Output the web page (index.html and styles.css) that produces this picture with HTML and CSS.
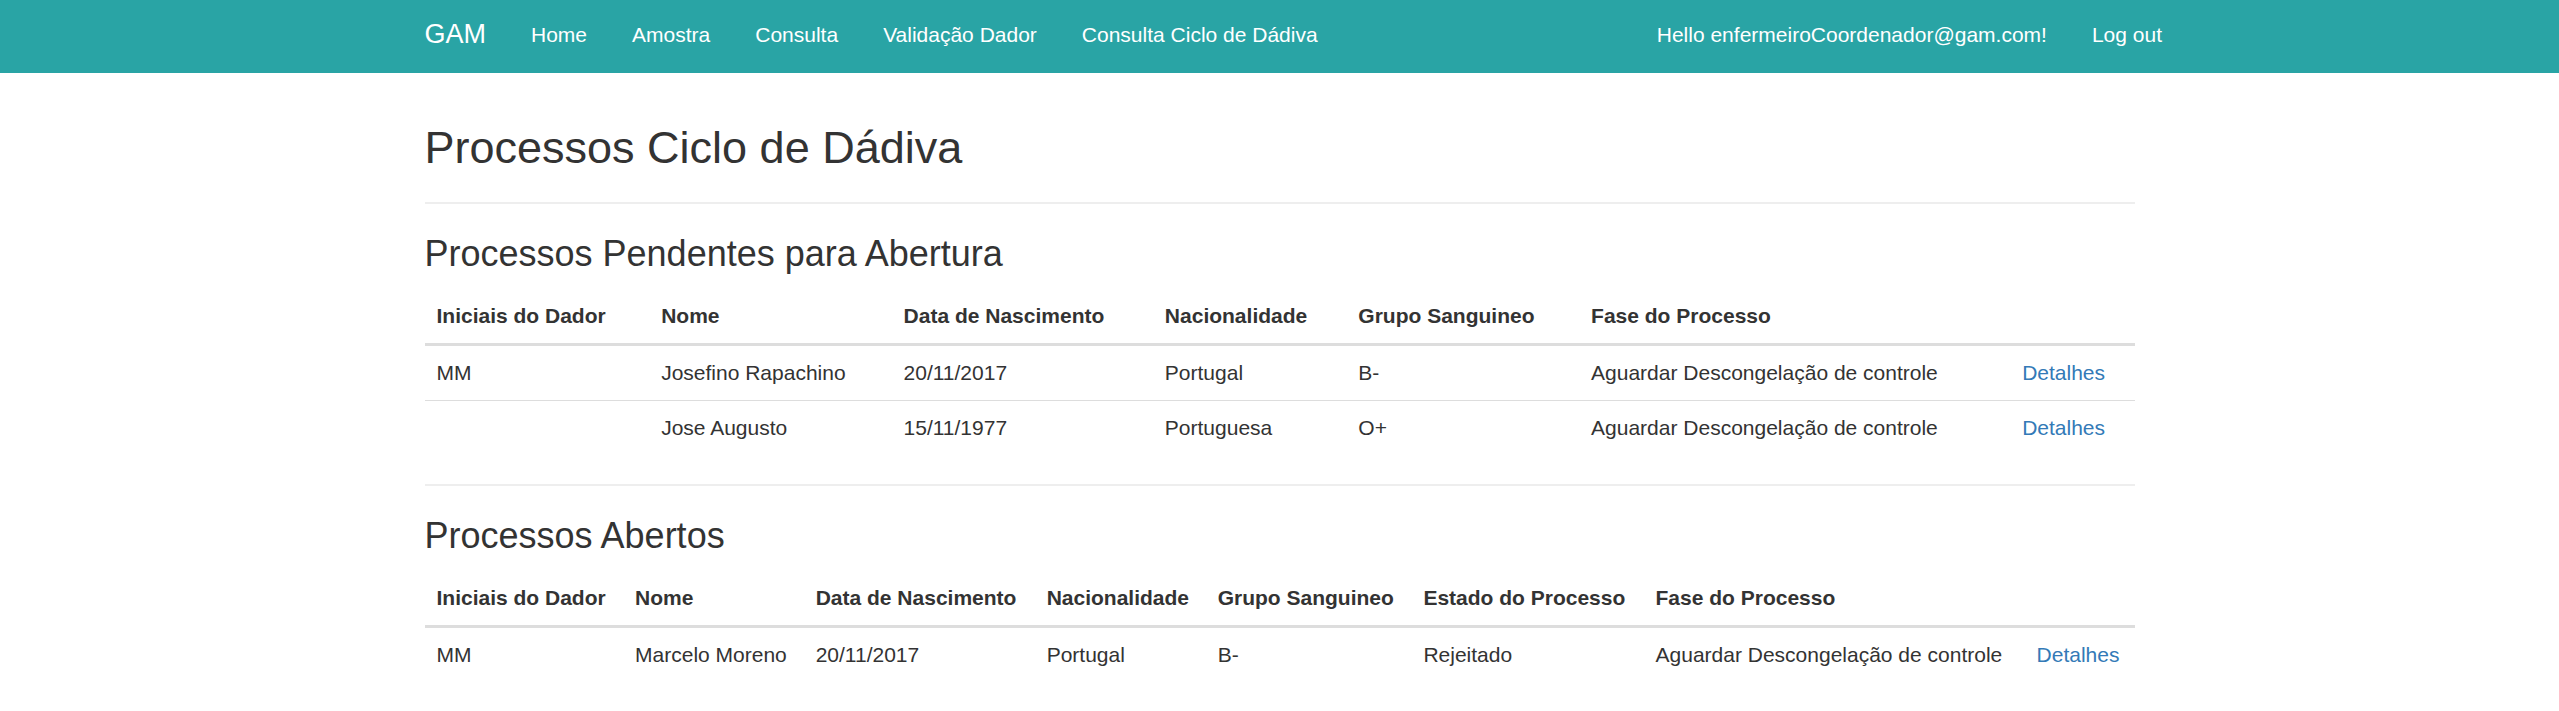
FILE: index.html
```html
<!DOCTYPE html>
<html lang="pt">
<head>
<meta charset="utf-8">
<title>Processos Ciclo de Dádiva - GAM</title>
<link rel="stylesheet" href="styles.css">
</head>
<body>
<header class="navbar">
  <div class="navbar-inner">
    <a class="brand" href="#">GAM</a>
    <ul class="nav">
      <li><a href="#">Home</a></li>
      <li><a href="#">Amostra</a></li>
      <li><a href="#">Consulta</a></li>
      <li><a href="#">Validação Dador</a></li>
      <li><a href="#">Consulta Ciclo de Dádiva</a></li>
    </ul>
    <ul class="nav nav-right">
      <li><a href="#">Hello enfermeiroCoordenador@gam.com!</a></li>
      <li><a href="#">Log out</a></li>
    </ul>
  </div>
</header>

<main class="container">
  <h2 class="page-title">Processos Ciclo de Dádiva</h2>
  <hr class="divider">

  <h3 class="section-title">Processos Pendentes para Abertura</h3>
  <table class="table">
    <thead>
      <tr>
        <th>Iniciais do Dador</th>
        <th>Nome</th>
        <th>Data de Nascimento</th>
        <th>Nacionalidade</th>
        <th>Grupo Sanguineo</th>
        <th>Fase do Processo</th>
        <th></th>
      </tr>
    </thead>
    <tbody>
      <tr>
        <td>MM</td>
        <td>Josefino Rapachino</td>
        <td>20/11/2017</td>
        <td>Portugal</td>
        <td>B-</td>
        <td>Aguardar Descongelação de controle</td>
        <td><a class="link" href="#">Detalhes</a></td>
      </tr>
      <tr>
        <td></td>
        <td>Jose Augusto</td>
        <td>15/11/1977</td>
        <td>Portuguesa</td>
        <td>O+</td>
        <td>Aguardar Descongelação de controle</td>
        <td><a class="link" href="#">Detalhes</a></td>
      </tr>
    </tbody>
  </table>

  <hr class="divider">

  <h3 class="section-title">Processos Abertos</h3>
  <table class="table table-last">
    <thead>
      <tr>
        <th>Iniciais do Dador</th>
        <th>Nome</th>
        <th>Data de Nascimento</th>
        <th>Nacionalidade</th>
        <th>Grupo Sanguineo</th>
        <th>Estado do Processo</th>
        <th>Fase do Processo</th>
        <th></th>
      </tr>
    </thead>
    <tbody>
      <tr>
        <td>MM</td>
        <td>Marcelo Moreno</td>
        <td>20/11/2017</td>
        <td>Portugal</td>
        <td>B-</td>
        <td>Rejeitado</td>
        <td>Aguardar Descongelação de controle</td>
        <td><a class="link" href="#">Detalhes</a></td>
      </tr>
    </tbody>
  </table>
</main>
</body>
</html>
```

FILE: styles.css
```css
* {
  box-sizing: border-box;
}

html, body {
  margin: 0;
  padding: 0;
  overflow: hidden;
}

body {
  font-family: "Liberation Sans", Arial, Helvetica, sans-serif;
  font-size: 21px;
  line-height: 30px;
  color: #333333;
  background: #ffffff;
}

/* Navbar */
.navbar {
  background: #29a4a5;
  height: 73px;
}

.navbar-inner {
  width: 1755px;
  margin: 0 auto;
  padding: 0 22.5px;
  display: flex;
  align-items: flex-start;
}

.brand {
  display: block;
  margin-left: -22.5px;
  padding: 18.5px 22.5px;
  font-size: 27px;
  line-height: 30px;
  color: #ffffff;
  text-decoration: none;
}

.nav {
  display: flex;
  list-style: none;
  margin: 0;
  padding: 0;
}

.nav a {
  display: block;
  padding: 19.5px 22.5px;
  font-size: 21px;
  line-height: 30px;
  color: #ffffff;
  text-decoration: none;
  white-space: nowrap;
}

.nav-right {
  margin-left: auto;
  margin-right: -50px;
}

/* Content */
.container {
  width: 1755px;
  margin: 0 auto;
  padding: 0 22.5px;
}

.page-title {
  margin: 50px 0 15px;
  font-size: 45px;
  line-height: 49.5px;
  font-weight: 500;
}

.divider {
  margin: 29.5px 0 30px;
  border: 0;
  border-top: 2px solid #eeeeee;
  height: 0;
}

.section-title {
  margin: 30px 0 15px;
  font-size: 36px;
  line-height: 39.6px;
  font-weight: 500;
}

.table {
  width: 100%;
  border-collapse: collapse;
  border-spacing: 0;
  margin-bottom: 28px;
}

.table-last {
  margin-bottom: 0;
}

.table th,
.table td {
  padding: 12px;
  text-align: left;
  vertical-align: top;
  line-height: 30px;
  white-space: nowrap;
}

.table th {
  font-weight: bold;
  border-bottom: 3px solid #dddddd;
  vertical-align: bottom;
}

.table td {
  border-top: 1px solid #dddddd;
}

.table thead + tbody tr:first-child td {
  border-top: 0;
}

.link {
  color: #337ab7;
  text-decoration: none;
}
```
